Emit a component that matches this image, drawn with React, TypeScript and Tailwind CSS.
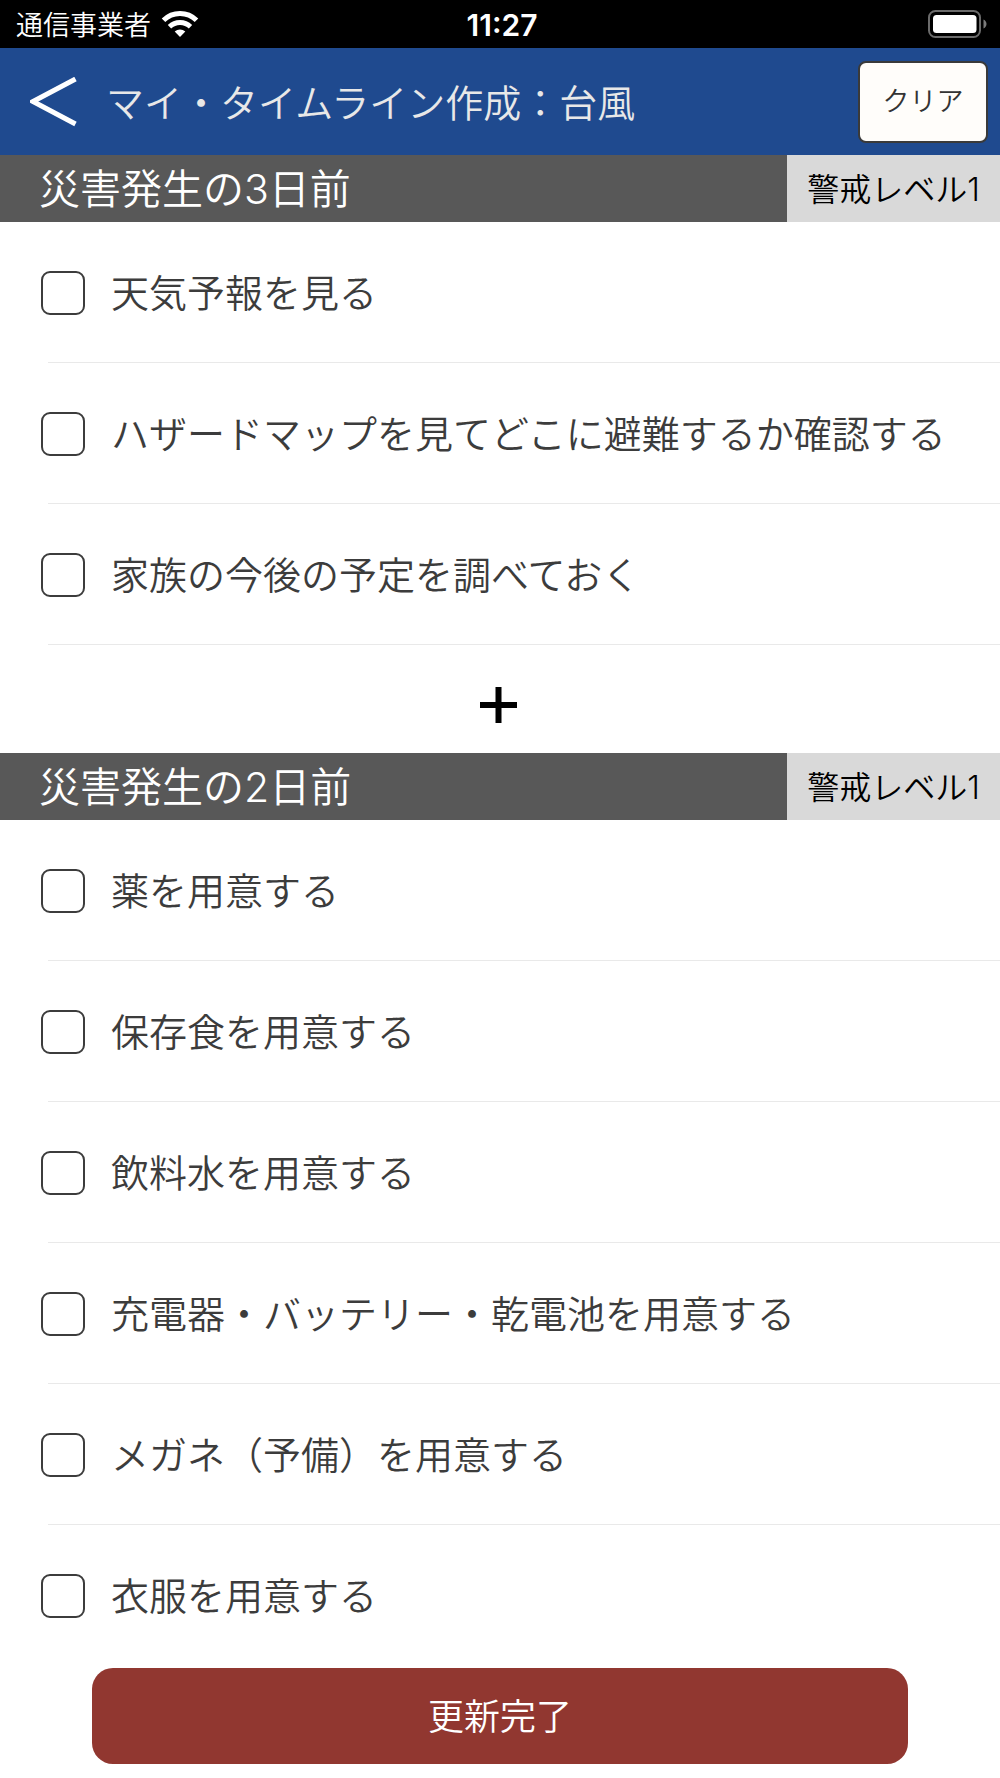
import { useState } from "react";

interface Task {
  id: string;
  label: string;
}

interface Section {
  title: string;
  level: string;
  tasks: Task[];
  canAdd: boolean;
}

const sections: Section[] = [
  {
    title: "災害発生の3日前",
    level: "警戒レベル1",
    canAdd: true,
    tasks: [
      { id: "weather", label: "天気予報を見る" },
      { id: "hazard-map", label: "ハザードマップを見てどこに避難するか確認する" },
      { id: "family", label: "家族の今後の予定を調べておく" },
    ],
  },
  {
    title: "災害発生の2日前",
    level: "警戒レベル1",
    canAdd: false,
    tasks: [
      { id: "medicine", label: "薬を用意する" },
      { id: "food", label: "保存食を用意する" },
      { id: "water", label: "飲料水を用意する" },
      { id: "battery", label: "充電器・バッテリー・乾電池を用意する" },
      { id: "glasses", label: "メガネ（予備）を用意する" },
      { id: "clothes", label: "衣服を用意する" },
    ],
  },
];

function StatusBar() {
  return (
    <div className="grid h-12 grid-cols-3 items-center bg-black pr-3 pl-4 text-white">
      <div className="flex items-center gap-2.5">
        <span className="pt-1 text-[27px] leading-8">通信事業者</span>
        <svg width="38" height="28" viewBox="0 0 38 28" aria-hidden="true">
          <path d="M2.500 10.200a23.500 23.500 0 0 1 33 0" fill="none" stroke="#fff" strokeWidth="5" />
          <path d="M8.500 16.800a15 15 0 0 1 21 0" fill="none" stroke="#fff" strokeWidth="4.8" />
          <path d="M13.700 21.600a8 8 0 0 1 10.600 0L19 27z" fill="#fff" />
        </svg>
      </div>
      <span className="pt-0.5 text-center text-[30px] leading-8 font-semibold">11:27</span>
      <svg
        className="justify-self-end"
        width="60"
        height="28"
        viewBox="0 0 60 28"
        aria-hidden="true"
      >
        <rect x="1" y="1" width="51" height="26" rx="6.5" fill="none" stroke="#6b6b6b" strokeWidth="2" />
        <rect x="5" y="5" width="43.5" height="18" rx="3.5" fill="#fff" />
        <path d="M55.5 9.5c4 1.800 4 7.200 0 9z" fill="#7a7a7a" />
      </svg>
    </div>
  );
}

function Header({ onClear }: { onClear: () => void }) {
  return (
    <header className="flex h-[107px] items-center bg-[#1f4a8f] pr-3 pl-[30px]">
      <button type="button" aria-label="戻る" className="mr-7">
        <svg width="48" height="50" viewBox="0 0 48 50" fill="none" stroke="#fff" strokeWidth="5">
          <path d="M45.500 2 3 24.500l42.500 22.500" />
        </svg>
      </button>
      <h1 className="flex-1 pt-0.5 text-[38px] leading-[48px] text-[#e8e8e8]">
        マイ・タイムライン作成：台風
      </h1>
      <button
        type="button"
        onClick={onClear}
        className="h-[82px] w-[130px] rounded-lg border-2 border-[#3a3a3a] bg-[#fffdfa] pt-0.5 text-[27px] text-[#333333]"
      >
        クリア
      </button>
    </header>
  );
}

export default function App() {
  const [checked, setChecked] = useState<string[]>([]);

  const toggle = (id: string) => {
    setChecked((prev) =>
      prev.includes(id) ? prev.filter((item) => item !== id) : [...prev, id]
    );
  };

  return (
    <div
      lang="ja"
      className="flex min-h-screen flex-col bg-white font-['Inter','Noto_Sans_CJK_JP',sans-serif] font-[350]"
    >
      <StatusBar />
      <Header onClear={() => setChecked([])} />

      <main className="flex-1">
        {sections.map((section) => (
          <section key={section.title}>
            {/* Section heading with alert level */}
            <div className="flex h-[67px] bg-[#585858]">
              <h2 className="flex flex-1 items-center pl-[39px] text-[41px] leading-[56px] text-white">
                {section.title}
              </h2>
              <div className="flex w-[213px] items-center justify-center bg-[#d9d9d9] pt-0.5 text-[32px] leading-[48px] text-black">
                {section.level}
              </div>
            </div>

            <ul>
              {section.tasks.map((task) => (
                <li key={task.id} className="group">
                  <label className="flex h-[140px] items-center gap-[26px] pt-0.5 pl-[41px] text-[38px] leading-[48px] text-[#3c3c3c]">
                    <input
                      type="checkbox"
                      checked={checked.includes(task.id)}
                      onChange={() => toggle(task.id)}
                      className="size-[44px] shrink-0 appearance-none rounded-[9px] border-2 border-[#3c3c3c] bg-white checked:bg-[#1f4a8f]"
                    />
                    {task.label}
                  </label>
                  <div
                    className={
                      section.canAdd
                        ? "ml-12 h-px bg-[#e9e9e9]"
                        : "ml-12 h-px bg-[#e9e9e9] group-last:bg-white"
                    }
                  />
                </li>
              ))}
            </ul>

            {section.canAdd && (
              <div className="flex h-[108px] items-center justify-center pt-3 pr-0.5">
                <button type="button" aria-label="追加">
                  <svg width="38" height="36" viewBox="0 0 38 36" stroke="#000" strokeWidth="6">
                    <path d="M0 18h37M18.500 0v36" />
                  </svg>
                </button>
              </div>
            )}
          </section>
        ))}
      </main>

      <footer className="sticky bottom-0 px-[92px] pt-0.5 pb-3.5">
        <button
          type="button"
          className="h-24 w-full rounded-[21px] bg-[#913730] pt-0.5 text-[36px] leading-[48px] text-white"
        >
          更新完了
        </button>
      </footer>
    </div>
  );
}
